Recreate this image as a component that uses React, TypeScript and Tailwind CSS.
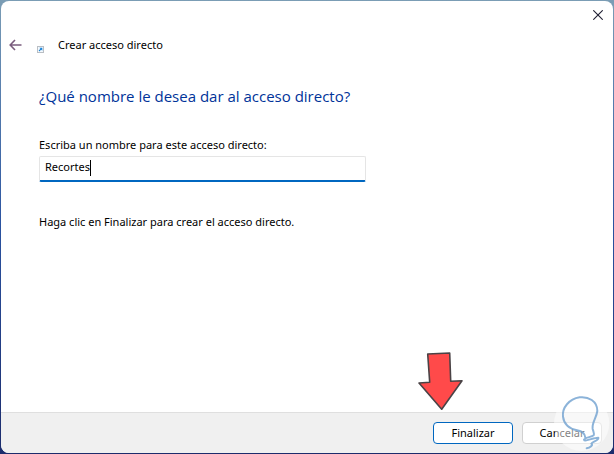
import { useState } from 'react';

function BackArrow() {
  return (
    <svg viewBox="0 0 14 14" className="h-3.5 w-3.5" fill="none" stroke="#7a5c7d" strokeWidth="1.6">
      <path d="M12.5 7H1.5M6 2L1.2 7L6 12" />
    </svg>
  );
}

function ShortcutIcon() {
  return (
    <svg viewBox="0 0 7 7" className="h-[7px] w-[7px]" fill="none">
      <rect x="0.5" y="0.5" width="6" height="6" fill="#f4f9fd" stroke="#b9bec4" />
      <path d="M2 5l2.4-2.4" stroke="#1b84d8" strokeWidth="1.1" />
      <path d="M2.4 1.8h2.9v2.9z" fill="#1b84d8" />
    </svg>
  );
}

function CloseIcon() {
  return (
    <svg viewBox="0 0 10 10" className="h-2.5 w-2.5" fill="none" stroke="#1f1f33" strokeWidth="1.1">
      <path d="M0.3 0.3l9.4 9.4M9.7 0.3L0.3 9.7" />
    </svg>
  );
}

function RedArrow() {
  return (
    <svg
      viewBox="0 0 46 60"
      className="pointer-events-none absolute bottom-full right-[49px] mb-3 h-[60px] w-[46px]"
      aria-hidden="true"
    >
      <path
        d="M9.7 4L31.7 3L32.7 31.3L44 30.7L23.7 59.3L1 33L11.7 32.3Z"
        fill="#ff4a4a"
        stroke="#4a4346"
        strokeWidth="1.6"
        strokeLinejoin="round"
      />
    </svg>
  );
}

function BulbLogo() {
  return (
    <svg
      viewBox="0 0 207 207"
      className="pointer-events-none absolute -right-px -bottom-px h-[69px] w-[69px]"
      fill="none"
      aria-hidden="true"
    >
      <circle cx="110" cy="115" r="83" fill="#ffffff" fillOpacity="0.5" />
      <path
        d="M121 158C120 146 112 139 96 136C76 132 57 119 54 95C51 68 72 42 104 37C130 34 157 48 157 78C154 100 140 112 143 132C145 140 149 147 146 151C140 156 118 158 117 164C119 172 147 157 160 158C163 166 142 170 139 176C146 180 135 188 125 190"
        stroke="#6fa0d0"
        strokeOpacity="0.8"
        strokeWidth="6"
        strokeLinecap="round"
        strokeLinejoin="round"
      />
    </svg>
  );
}

export default function App() {
  const [name, setName] = useState('Recortes');

  return (
    <div className="flex min-h-screen bg-linear-to-b from-[#7b9db5] via-[#2a52a0] to-[#1c2c6c] p-px font-['Noto_Sans','Open_Sans',sans-serif] text-[11px] text-black">
      <form className="relative flex flex-1 flex-col rounded-lg bg-white" onSubmit={(e) => e.preventDefault()}>
        <div className="flex justify-end px-2.5 pt-[9px]">
          <button type="button" aria-label="Cerrar">
            <CloseIcon />
          </button>
        </div>

        <header className="flex items-center px-2 pt-[17px]">
          <button type="button" aria-label="Atrás">
            <BackArrow />
          </button>
          <div className="mt-2 ml-3.5">
            <ShortcutIcon />
          </div>
          <span className="ml-3.5 leading-4">Crear acceso directo</span>
        </header>

        <main className="flex-1 px-[38px] pt-[31px]">
          <h1 className="font-['Open_Sans','Noto_Sans',sans-serif] text-[15px] leading-6 text-[#003399]">
            ¿Qué nombre le desea dar al acceso directo?
          </h1>

          <label htmlFor="shortcut-name" className="mt-[29px] block leading-4">
            Escriba un nombre para este acceso directo:
          </label>
          <div className="relative mt-[3px] max-w-[327px]">
            <input
              id="shortcut-name"
              type="text"
              value={name}
              onChange={(e) => setName(e.target.value)}
              className="block h-[26px] w-full rounded-xs border border-b-2 border-[#e5e5e5] border-b-[#0067c0] px-[5px] pb-1 outline-none"
            />
            <span className="absolute top-1 left-[51px] h-4 w-px bg-black" />
          </div>

          <p className="mt-8 leading-4">Haga clic en Finalizar para crear el acceso directo.</p>
        </main>

        <footer className="relative flex justify-end gap-[9px] rounded-b-lg border-t border-[#dfdfdf] bg-[#f0f0f0] px-[11px] py-[9px]">
          <div className="relative">
            <RedArrow />
            <button type="submit" className="h-[22px] w-20 rounded border border-[#0067c0] bg-white leading-4">
              Finalizar
            </button>
          </div>
          <button type="button" className="h-[22px] w-20 rounded border border-[#d0d0d0] bg-white leading-4">
            Cancelar
          </button>
          <BulbLogo />
        </footer>
      </form>
    </div>
  );
}
